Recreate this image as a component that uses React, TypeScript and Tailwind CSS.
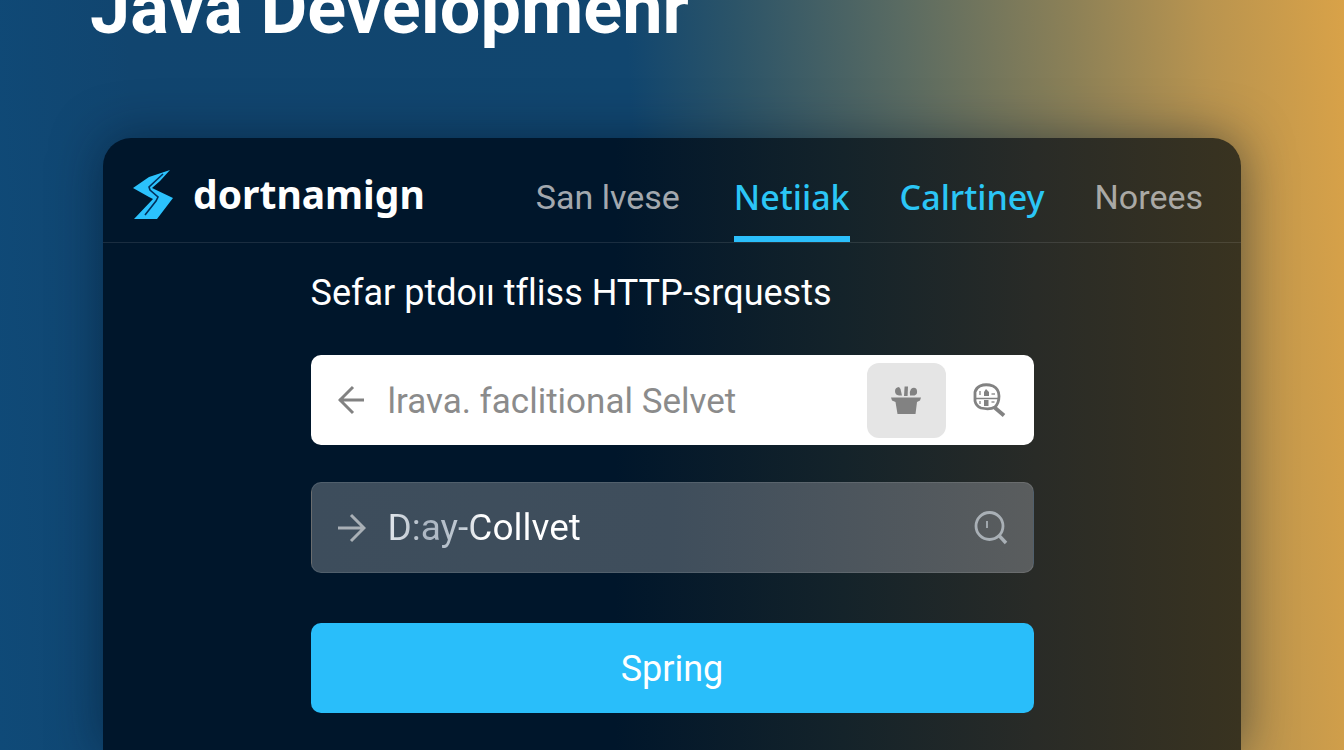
import { useState } from "react";

function LogoMark() {
  return (
    <svg viewBox="0 0 40 50" className="h-[50px] w-10 shrink-0" aria-hidden="true">
      <path d="M37 1 L16 8 L0 19 L16 28 L20 30 L1 50 L24 50 L40 29 L19 19 L27 12 Z" fill="#2bc2fd" />
      <path d="M30 5 L16 18 L17 21 L25 28 L23 32 L12 46" fill="none" stroke="#00305c" strokeWidth="1.6" />
    </svg>
  );
}

function ArrowIcon({ right = false }: { right?: boolean }) {
  return (
    <svg viewBox="0 0 28 30" className="h-[30px] w-7" fill="none" stroke="currentColor" strokeWidth="3" aria-hidden="true">
      {right ? <path d="M0 15 H26 M13 2 L26 15 L13 28" /> : <path d="M26 15 H1 M15 2 L2 15 L15 28" />}
    </svg>
  );
}

function PotIcon() {
  return (
    <svg viewBox="0 0 32 30" className="h-[30px] w-8" fill="currentColor" aria-hidden="true">
      <path d="M1 12.500 H31 L30 15.500 L27 17 L25.500 29 H7.500 L5.500 17 L2 15.500 Z" />
      <path d="M14.600 1.500 H18 L17.600 11 H14 Z" />
      <path d="M5 6 Q5 2.500 9 2 L10.500 4 L12 10.500 H9 Q5 10 5 6 Z" />
      <path d="M20 10 Q19.500 6 21 4 Q24 1.500 26.500 4 Q28.500 9 24.500 10.500 H20 Z" />
    </svg>
  );
}

function GridSearchIcon() {
  return (
    <svg viewBox="0 0 34 36" className="h-9 w-[34px]" fill="none" stroke="currentColor" strokeWidth="2.8" aria-hidden="true">
      <path d="M8 4 Q14 1.500 21 4 Q27 7 27 14 Q27 21 23 25 Q18 28 9 26 Q4 24 3 19 V10 Q4 6 8 4 Z" />
      <path d="M22 25 L32 33.500" strokeWidth="3.8" />
      <path d="M3 16.500 H26" strokeWidth="1.500" />
      <path d="M12 14 V10 L14 7 L17 10 V14 Z M12 18 H16.500 V24 H12 Z" fill="currentColor" stroke="none" />
      <path d="M19.500 12 H23 M19.500 20 H22.500 M8 9 V13 M8 19 V22" strokeWidth="2" opacity="0.65" />
    </svg>
  );
}

function SearchIcon() {
  return (
    <svg viewBox="0 0 34 36" className="h-9 w-[34px]" fill="none" stroke="currentColor" strokeWidth="2.8" aria-hidden="true">
      <circle cx="15.500" cy="16" r="13.500" />
      <path d="M25 25.500 L32 33" strokeWidth="3.4" />
      <path d="M13 11 V18" strokeWidth="1.800" />
    </svg>
  );
}

const tabs = [
  { label: "San lvese", style: "mr-1 text-[#a3a8ae]" },
  { label: "Netiiak", style: "font-['Noto_Sans',sans-serif] font-medium text-[#2bc6f6]", active: true },
  { label: "Calrtiney", style: "font-['Noto_Sans',sans-serif] font-medium text-[#2bc6f6]" },
  { label: "Norees", style: "text-[#aaa9a5]" },
];

export default function App() {
  const [first, setFirst] = useState("lrava. faclitional Selvet");
  const [second, setSecond] = useState("D:ay-Collvet");

  return (
    <main className="flex h-screen flex-col overflow-hidden bg-[linear-gradient(87deg,#0f4a78_0%,#11456f_12%,#11466f_48%,#2c5468_56%,#5a6b62_68%,#8b8057_80%,#b9944f_90%,#d9a248_100%)] font-[Roboto,sans-serif] text-white [font-variant-ligatures:none]">
      <h1 className="-mt-[26px] shrink-0 px-[90px] text-[72px] leading-[70px] font-bold whitespace-nowrap">Java Developmenr</h1>

      <section className="mx-[103px] mt-[94px] flex grow flex-col rounded-t-[28px] bg-[linear-gradient(90deg,#00162b_0%,#00162b_45%,#14232a_65%,#292b27_82%,#393320_100%)] shadow-[0_0_50px_rgba(0,20,40,0.5)]">
        <header className="flex h-[105px] shrink-0 items-stretch justify-between border-b border-white/10 pr-[38px] pl-[30px]">
          <a href="#home" className="flex items-center gap-5 pt-2">
            <LogoMark />
            <span className="font-['Noto_Sans',sans-serif] text-[39px] leading-[50px] font-bold">dortnamign</span>
          </a>
          <nav className="flex items-stretch gap-[50px]">
            {tabs.map((tab) => (
              <a
                key={tab.label}
                href={"#" + tab.label}
                className={
                  "flex items-center border-b-[6px] pt-5 text-[34px] leading-10 whitespace-nowrap " +
                  (tab.active ? "border-[#2bbffb] " : "border-transparent ") +
                  tab.style
                }
              >
                {tab.label}
              </a>
            ))}
          </nav>
        </header>

        <form className="mx-auto flex w-full max-w-[723px] flex-col pt-7" onSubmit={(event) => event.preventDefault()}>
          <label htmlFor="first" className="text-[36px] leading-[44px] whitespace-nowrap">
            Sefar ptdoıı tfliss HTTP-srquests
          </label>

          <div className="mt-10 flex h-[90px] items-center rounded-[10px] bg-white pr-7 pl-[27px] text-[#828282]">
            <ArrowIcon />
            <input
              id="first"
              className="ml-[22px] min-w-0 flex-1 bg-transparent pt-1 text-[35px] leading-[44px] text-[#8b8b8b] outline-none"
              value={first}
              onChange={(event) => setFirst(event.target.value)}
            />
            <button type="button" aria-label="Basket" className="flex h-[75px] w-[79px] items-center justify-center rounded-xl bg-[#e5e5e5]">
              <PotIcon />
            </button>
            <button type="button" aria-label="Search" className="ml-[26px]">
              <GridSearchIcon />
            </button>
          </div>

          <div className="mt-[37px] flex h-[91px] items-center rounded-[10px] border border-white/10 bg-[linear-gradient(90deg,#3d4d5c_0%,#3f4e5c_50%,#5a5d5e_100%)] pr-[25px] pl-[26px] text-[#a9b0b6]">
            <ArrowIcon right />
            <input
              aria-label="Servlet"
              className="ml-[22px] min-w-0 flex-1 bg-[linear-gradient(90deg,#e3e8ed_0px,#a9b4c0_40px,#c3ccd5_75px,#ffffff_95px)] bg-clip-text text-[37px] leading-[44px] text-transparent caret-white outline-none"
              value={second}
              onChange={(event) => setSecond(event.target.value)}
            />
            <button type="button" aria-label="Find">
              <SearchIcon />
            </button>
          </div>

          <button type="submit" className="mt-[50px] h-[90px] rounded-[10px] bg-[#29befa] pt-[2px] text-[36px] leading-[44px]">
            Spring
          </button>
        </form>
      </section>
    </main>
  );
}
